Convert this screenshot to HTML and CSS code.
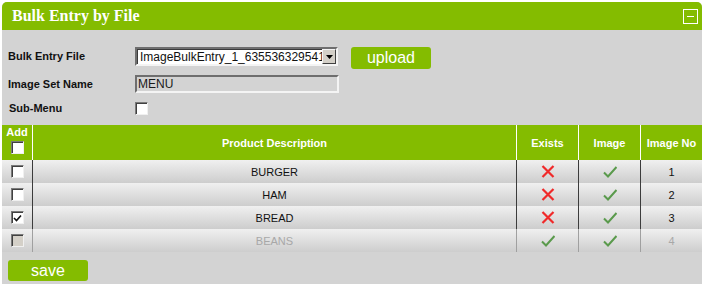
FILE: index.html
```html
<!DOCTYPE html>
<html lang="en">
<head>
    <meta charset="UTF-8">
    <title>Bulk Entry by File</title>
    <link rel="stylesheet" href="styles.css">
</head>
<body>
    <div class="panel">
        <div class="panel-head">
            <h1 class="panel-title">Bulk Entry by File</h1>
            <span class="minimize"></span>
        </div>

        <div class="entry-form">
            <div class="form-row">
                <label class="form-label">Bulk Entry File</label>
                <div class="fake-select">
                    <span class="select-value">ImageBulkEntry_1_6355363295418</span>
                    <span class="select-arrow">
                        <svg width="7" height="4" viewBox="0 0 7 4"><path d="M0 0h7L3.5 4z" fill="#000"/></svg>
                    </span>
                </div>
                <button class="green-btn upload-btn">upload</button>
            </div>
            <div class="form-row">
                <label class="form-label">Image Set Name</label>
                <input class="set-name" type="text" value="MENU" readonly>
            </div>
            <div class="form-row">
                <label class="form-label sub-label">Sub-Menu</label>
                <span class="check"></span>
            </div>
        </div>

        <table class="product-table">
            <thead>
                <tr>
                    <th class="col-add">Add<span class="check head-check"></span></th>
                    <th class="col-desc">Product Description</th>
                    <th class="col-small">Exists</th>
                    <th class="col-small">Image</th>
                    <th class="col-small">Image No</th>
                </tr>
            </thead>
            <tbody>
                <tr>
                    <td><span class="check"></span></td>
                    <td>BURGER</td>
                    <td><svg class="icon" width="14" height="13" viewBox="0 0 14 13"><path d="M1.5 1L12.5 12M12.5 1L1.5 12" stroke="#f02a2a" stroke-width="2.2"/></svg></td>
                    <td><svg class="icon" width="14" height="12" viewBox="0 0 14 12"><path d="M1 6.5L5 10.5L13.5 1" stroke="#5a9a4c" stroke-width="2" fill="none"/></svg></td>
                    <td>1</td>
                </tr>
                <tr>
                    <td><span class="check"></span></td>
                    <td>HAM</td>
                    <td><svg class="icon" width="14" height="13" viewBox="0 0 14 13"><path d="M1.5 1L12.5 12M12.5 1L1.5 12" stroke="#f02a2a" stroke-width="2.2"/></svg></td>
                    <td><svg class="icon" width="14" height="12" viewBox="0 0 14 12"><path d="M1 6.5L5 10.5L13.5 1" stroke="#5a9a4c" stroke-width="2" fill="none"/></svg></td>
                    <td>2</td>
                </tr>
                <tr>
                    <td><span class="check checked"><svg width="9" height="8" viewBox="0 0 9 8"><path d="M1 4L3.5 6.5L8 1.5" stroke="#111" stroke-width="1.6" fill="none"/></svg></span></td>
                    <td>BREAD</td>
                    <td><svg class="icon" width="14" height="13" viewBox="0 0 14 13"><path d="M1.5 1L12.5 12M12.5 1L1.5 12" stroke="#f02a2a" stroke-width="2.2"/></svg></td>
                    <td><svg class="icon" width="14" height="12" viewBox="0 0 14 12"><path d="M1 6.5L5 10.5L13.5 1" stroke="#5a9a4c" stroke-width="2" fill="none"/></svg></td>
                    <td>3</td>
                </tr>
                <tr class="row-disabled">
                    <td><span class="check check-disabled"></span></td>
                    <td>BEANS</td>
                    <td><svg class="icon" width="14" height="12" viewBox="0 0 14 12"><path d="M1 6.5L5 10.5L13.5 1" stroke="#5a9a4c" stroke-width="2" fill="none"/></svg></td>
                    <td><svg class="icon" width="14" height="12" viewBox="0 0 14 12"><path d="M1 6.5L5 10.5L13.5 1" stroke="#5a9a4c" stroke-width="2" fill="none"/></svg></td>
                    <td>4</td>
                </tr>
            </tbody>
        </table>

        <div class="panel-foot">
            <button class="green-btn save-btn">save</button>
        </div>
    </div>
</body>
</html>
```

FILE: styles.css
```css
body {
    margin: 0;
    padding: 2px;
    background-color: #ffffff;
    font-family: 'Liberation Sans', Arial, sans-serif;
}
.panel {
    width: 700px;
    height: 282px;
    background-color: #d3d3d3;
    border-radius: 5px 5px 0 0;
    overflow: hidden;
}
.panel-head {
    height: 28px;
    background-color: #84bc00;
    display: flex;
    align-items: center;
    justify-content: space-between;
    padding: 0 4px 0 10px;
}
.panel-title {
    margin: 0;
    font-family: 'Liberation Serif', 'Times New Roman', serif;
    font-size: 16px;
    font-weight: bold;
    color: white;
}
.minimize {
    position: relative;
    width: 13px;
    height: 13px;
    border: 1px solid white;
}
.minimize::after {
    content: '';
    position: absolute;
    left: 3px;
    top: 6px;
    width: 7px;
    height: 1px;
    background-color: white;
}
.entry-form {
    padding: 17px 0 10px 6px;
    display: flex;
    flex-direction: column;
    gap: 6px;
}
.form-row {
    display: flex;
    align-items: flex-start;
}
.form-label {
    width: 127px;
    line-height: 19px;
    font-size: 11px;
    font-weight: bold;
    color: #111;
}
.sub-label {
    padding-left: 1px;
    width: 126px;
    line-height: 13px;
}
.form-row:last-child {
    margin-top: 2px;
}
.fake-select {
    width: 199px;
    height: 15px;
    display: flex;
    background-color: white;
    border: 2px solid;
    border-color: #6e6e6e #f4f4f4 #f4f4f4 #6e6e6e;
    box-shadow: inset 1px 1px 0 #3a3a3a;
}
.select-value {
    flex: 1;
    overflow: hidden;
    white-space: nowrap;
    font-size: 12px;
    line-height: 16px;
    padding-left: 3px;
    color: #111;
}
.select-arrow {
    width: 14px;
    display: flex;
    align-items: center;
    justify-content: center;
    background-color: #d4d0c8;
    border: 1px solid;
    border-color: #f4f4f4 #404040 #404040 #f4f4f4;
    box-sizing: border-box;
}
.green-btn {
    width: 80px;
    height: 22px;
    border: none;
    border-radius: 3px;
    background-color: #84bc00;
    color: white;
    font-family: 'Liberation Sans', Arial, sans-serif;
    font-size: 16px;
    padding: 0;
    cursor: pointer;
}
.upload-btn {
    margin-left: 13px;
}
.set-name {
    width: 204px;
    height: 18px;
    box-sizing: border-box;
    margin: 0;
    padding: 0 0 0 1px;
    background-color: #d3d3d3;
    border: 2px solid;
    border-color: #6e6e6e #f4f4f4 #f4f4f4 #6e6e6e;
    font-family: 'Liberation Sans', Arial, sans-serif;
    font-size: 12px;
    color: #1a1a1a;
    outline: none;
}
.check {
    display: inline-flex;
    align-items: center;
    justify-content: center;
    width: 11px;
    height: 11px;
    background-color: white;
    border: 1px solid;
    border-color: #7a7a7a #f0f0f0 #f0f0f0 #7a7a7a;
    box-shadow: inset 1px 1px 0 #404040;
    vertical-align: middle;
}
.check-disabled {
    background-color: #d4d0c8;
}
.product-table {
    width: 700px;
    border-collapse: separate;
    border-spacing: 0;
    font-size: 11px;
}
.product-table th {
    height: 35px;
    padding: 0;
    background-color: #84bc00;
    color: white;
    font-weight: bold;
    border-left: 1px solid white;
}
.product-table th.col-add {
    width: 30px;
    border-left: none;
    vertical-align: top;
    line-height: 13px;
    padding-top: 1px;
    box-sizing: border-box;
}
.head-check {
    display: flex;
    margin: 2px auto 0;
}
.product-table th.col-small {
    width: 61px;
}
.product-table td {
    height: 23px;
    padding: 0;
    text-align: center;
    color: #111;
    background: linear-gradient(#f0f0f0, #cdcdcd);
    border-left: 1px solid #3c3c3c;
}
.product-table td:first-child {
    border-left: none;
}
.icon {
    display: block;
    margin: 0 auto;
}
.row-disabled td {
    color: #a8a8a8;
    border-left-color: #a0a0a0;
}
.panel-foot {
    padding: 8px 0 0 6px;
}
.save-btn {
    height: 21px;
}
```
